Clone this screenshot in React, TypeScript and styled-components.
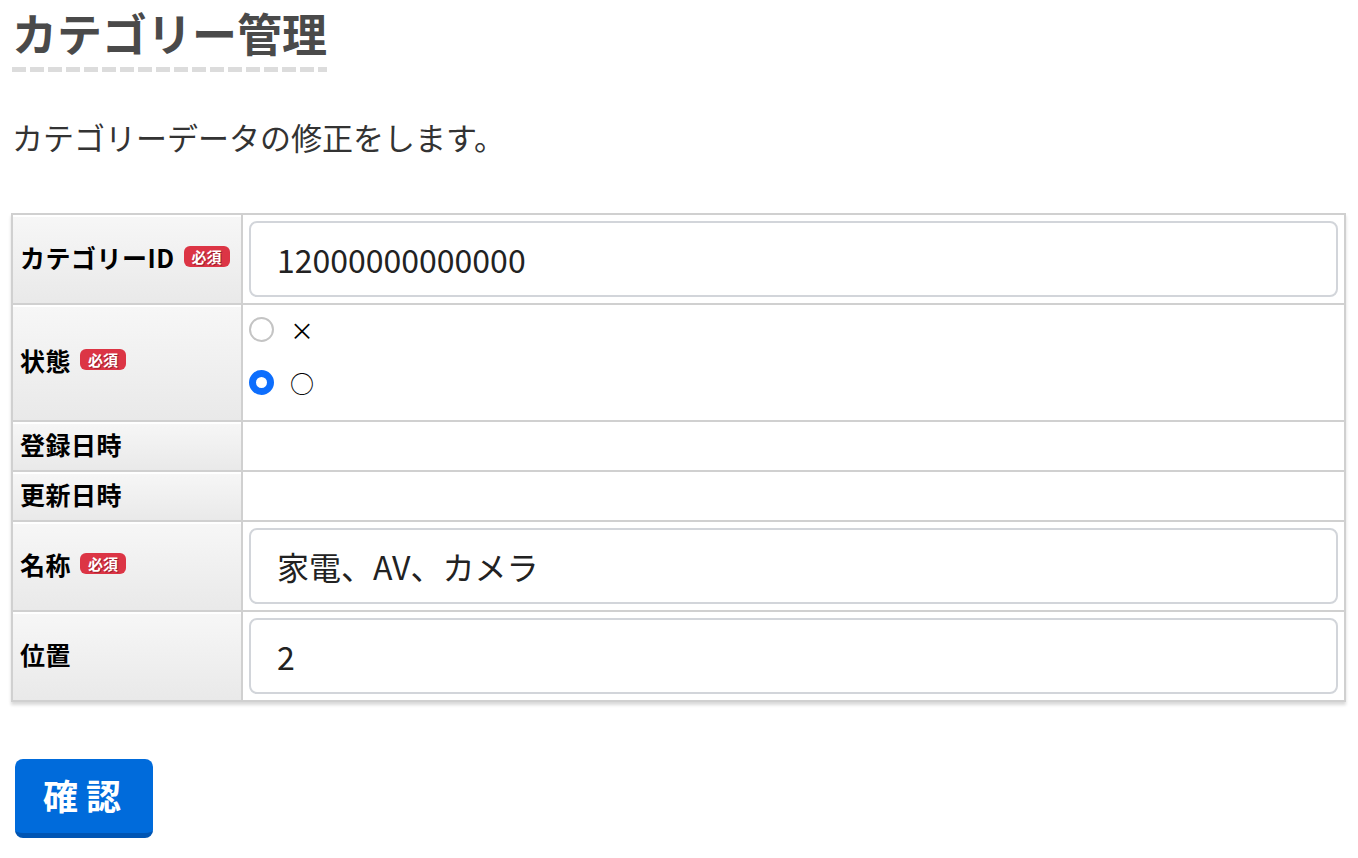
import React from 'react';
import { styled, createGlobalStyle } from 'styled-components';

const GlobalStyle = createGlobalStyle`
    body{
        margin: 0;
        padding: 0 12px 0 11px;
        background: #fff;
        font-family: "Noto Sans CJK JP", "Noto Sans", sans-serif;
        color: #333;
    }
`

function App() {
    return (
        <>
            <GlobalStyle />
            <Page>
                <Title>カテゴリー管理</Title>
                <Lead>カテゴリーデータの修正をします。</Lead>
                <FormTable>
                    <tbody>
                        <tr>
                            <Th>カテゴリーID<Required>必須</Required></Th>
                            <Td><TextInput defaultValue="12000000000000" /></Td>
                        </tr>
                        <tr>
                            <Th>状態<Required>必須</Required></Th>
                            <RadioCell>
                                <RadioRow>
                                    <Radio type="radio" name="status" value="0" />
                                    <span>×</span>
                                </RadioRow>
                                <RadioRow>
                                    <Radio type="radio" name="status" value="1" defaultChecked />
                                    <span>○</span>
                                </RadioRow>
                            </RadioCell>
                        </tr>
                        <tr>
                            <Th $short>登録日時</Th>
                            <Td></Td>
                        </tr>
                        <tr>
                            <Th $short>更新日時</Th>
                            <Td></Td>
                        </tr>
                        <tr>
                            <Th>名称<Required>必須</Required></Th>
                            <Td><TextInput defaultValue="家電、AV、カメラ" /></Td>
                        </tr>
                        <tr>
                            <Th>位置</Th>
                            <Td><TextInput defaultValue="2" /></Td>
                        </tr>
                    </tbody>
                </FormTable>
                <SubmitButton type="button">確認</SubmitButton>
            </Page>
        </>
    )
}

export default App

const Page = styled.div`
    padding-top: 4px;
`
const Title = styled.h1`
    display: inline-block;
    margin: 0 0 0 1px;
    padding-bottom: 10px;
    font-size: 45px;
    font-weight: 700;
    line-height: 58px;
    color: #4a4a4a;
    background: repeating-linear-gradient(90deg, #dcdcdc 0 14px, transparent 14px 18px) left bottom / 100% 5px no-repeat;
`
const Lead = styled.p`
    margin: 43px 0 54px 1px;
    font-size: 31px;
    line-height: 44px;
    color: #333;
`
const FormTable = styled.table`
    width: 100%;
    border-collapse: collapse;
    border: 2px solid #cfcfcf;
    box-shadow: 0 3px 3px rgba(0, 0, 0, 0.15);
`
const Th = styled.th<{ $short?: boolean }>`
    width: 215px;
    height: ${p => p.$short ? '43px' : 'auto'};
    padding: 0 6px 5px 7px;
    text-align: left;
    vertical-align: middle;
    font-size: 25px;
    font-weight: 700;
    letter-spacing: 0.5px;
    color: #000;
    white-space: nowrap;
    border: 2px solid #d0d0d0;
    background: linear-gradient(#f7f7f7, #e9e9e9);
    box-shadow: inset 0 2px 0 #fff;
`
const Required = styled.span`
    display: inline-block;
    position: relative;
    top: -5px;
    margin-left: 9px;
    padding: 0 8px;
    font-size: 15px;
    line-height: 21px;
    font-weight: 700;
    letter-spacing: 0;
    color: #fff;
    background: #dc3545;
    border-radius: 6px;
    text-shadow: 1px 1px 0 #a0202c;
`
const Td = styled.td`
    padding: 6px;
    border: 2px solid #d0d0d0;
    background: #fff;
`
const RadioCell = styled(Td)`
    padding: 7px 6px 21px;
`
const RadioRow = styled.label`
    display: flex;
    align-items: center;
    gap: 16px;
    height: 34px;
    font-size: 24px;
    color: #000;
    & + &{
        margin-top: 19px;
    }
`
const Radio = styled.input`
    appearance: none;
    width: 25px;
    height: 25px;
    margin: 0;
    border: 2px solid #c4c4c4;
    border-radius: 50%;
    background: #fff;
    &:checked{
        border: 7px solid #0d6efd;
    }
`
const TextInput = styled.input`
    display: block;
    box-sizing: border-box;
    width: 100%;
    height: 76px;
    padding: 0 26px;
    font-family: "Noto Sans CJK JP", "Noto Sans", sans-serif;
    font-size: 32px;
    color: #222;
    border: 2px solid #d2d5da;
    border-radius: 8px;
    background: #fff;
    outline: none;
`
const SubmitButton = styled.button`
    display: block;
    margin: 57px 0 0 4px;
    width: 138px;
    height: 79px;
    padding: 0 0 4px;
    font-family: "Noto Sans CJK JP", sans-serif;
    font-size: 35px;
    font-weight: 700;
    letter-spacing: 8px;
    text-indent: 4px;
    color: #fff;
    background: #006bdb;
    border: none;
    border-bottom: 5px solid #0055b3;
    border-radius: 8px;
`
